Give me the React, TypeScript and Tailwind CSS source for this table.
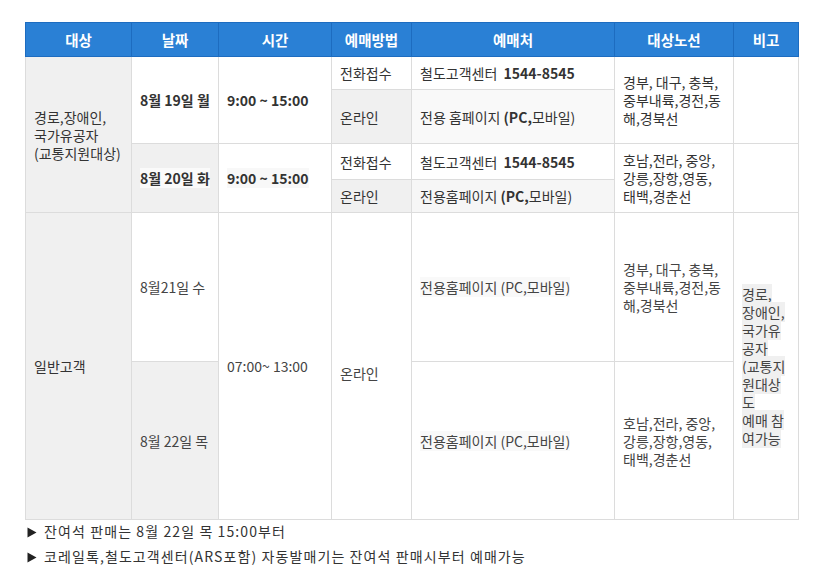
const FONT = { fontFamily: '"Noto Sans CJK KR", "Noto Sans", sans-serif' };

const th = "border border-[#1d6cc0] bg-[#2a80d5] text-white font-bold text-[14.5px] text-center align-middle";
const td = "border border-[#dcdcdc] px-2 align-middle text-[14px] leading-[18px] text-[#333]";

const bigoLines = ["경로,", "장애인,", "국가유", "공자", "(교통지", "원대상", "도", "예매 참", "여가능"];

function Arrow() {
  return (
    <svg width="10" height="11" viewBox="0 0 10 11" className="inline-block mr-[7px] align-[-1px]">
      <path d="M0.5 0.5 L9.5 5.5 L0.5 10.5 Z" fill="#222" />
    </svg>
  );
}

export default function App() {
  return (
    <div className="bg-white w-[817px] h-[575px] pt-[22px] pl-[25px]" style={FONT}>
      <table className="table-fixed border-collapse w-[773px]">
        <colgroup>
          <col className="w-[106px]" />
          <col className="w-[87px]" />
          <col className="w-[113px]" />
          <col className="w-[80px]" />
          <col className="w-[203px]" />
          <col className="w-[119px]" />
          <col className="w-[65px]" />
        </colgroup>
        <thead>
          <tr className="h-[34px]">
            <th className={th}>대상</th>
            <th className={th}>날짜</th>
            <th className={th}>시간</th>
            <th className={th}>예매방법</th>
            <th className={th}>예매처</th>
            <th className={th}>대상노선</th>
            <th className={th}>비고</th>
          </tr>
        </thead>
        <tbody>
          <tr className="h-[33px]">
            <td rowSpan={4} className={`${td} bg-[#f0f0f0]`}>
              경로,장애인,
              <br />
              국가유공자
              <br />
              (교통지원대상)
            </td>
            <td rowSpan={2} className={`${td} bg-white font-bold`}>8월 19일 월</td>
            <td rowSpan={2} className={`${td} bg-white font-bold`}>9:00 ~ 15:00</td>
            <td className={`${td} bg-white`}>전화접수</td>
            <td className={`${td} bg-white`}>
              철도고객센터&nbsp;&nbsp;<span className="font-bold">1544-8545</span>
            </td>
            <td rowSpan={2} className={`${td} bg-white`}>
              경부, 대구, 충복,
              <br />
              중부내륙,경전,동
              <br />
              해,경북선
            </td>
            <td rowSpan={2} className={`${td} bg-white`}></td>
          </tr>
          <tr className="h-[54px]">
            <td className={`${td} bg-[#f0f0f0]`}>온라인</td>
            <td className={`${td} bg-[#f9f9f9]`}>
              전용 홈페이지 <span className="font-bold">(PC,</span>모바일)
            </td>
          </tr>
          <tr className="h-[36px]">
            <td rowSpan={2} className={`${td} bg-[#f0f0f0] font-bold`}>
              <span className="bg-[#fafafa]">8월 20일 화</span>
            </td>
            <td rowSpan={2} className={`${td} bg-white font-bold`}>
              <span className="bg-[#f8f8f8]">9:00 ~ 15:00</span>
            </td>
            <td className={`${td} bg-white`}>전화접수</td>
            <td className={`${td} bg-white`}>
              철도고객센터&nbsp;&nbsp;<span className="font-bold">1544-8545</span>
            </td>
            <td rowSpan={2} className={`${td} bg-white`}>
              호남,전라, 중앙,
              <br />
              강릉,장항,영동,
              <br />
              태백,경춘선
            </td>
            <td rowSpan={2} className={`${td} bg-white`}></td>
          </tr>
          <tr className="h-[33px]">
            <td className={`${td} bg-[#f0f0f0]`}>온라인</td>
            <td className={`${td} bg-[#f6f6f6]`}>
              전용홈페이지 <span className="font-bold">(PC,</span>모바일)
            </td>
          </tr>
          <tr className="h-[149px]">
            <td rowSpan={2} className={`${td} bg-[#f0f0f0]`}>일반고객</td>
            <td className={`${td} bg-white text-[#444]`}>8월21일 수</td>
            <td rowSpan={2} className={`${td} bg-white text-[#444]`}>07:00~ 13:00</td>
            <td rowSpan={2} className={`${td} bg-white text-[#444] pt-[14px]`}>온라인</td>
            <td className={`${td} bg-white text-[#444]`}>
              <span className="bg-[#f9f9f9]">전용홈페이지 (PC,모바일)</span>
            </td>
            <td className={`${td} bg-white text-[#444]`}>
              경부, 대구, 충복,
              <br />
              중부내륙,경전,동
              <br />
              해,경북선
            </td>
            <td rowSpan={2} className={`${td} bg-white text-[#444]`}>
              {bigoLines.map((l) => (
                <div key={l} className="whitespace-nowrap">
                  <span className="bg-[#f0f0f0]">{l}</span>
                </div>
              ))}
            </td>
          </tr>
          <tr className="h-[158px]">
            <td className={`${td} bg-[#f0f0f0] text-[#444]`}>8월 22일 목</td>
            <td className={`${td} bg-white text-[#444]`}>
              <span className="bg-[#f9f9f9]">전용홈페이지 (PC,모바일)</span>
            </td>
            <td className={`${td} bg-white text-[#444]`}>
              호남,전라, 중앙,
              <br />
              강릉,장항,영동,
              <br />
              태백,경춘선
            </td>
          </tr>
        </tbody>
      </table>
      <div className="text-[14px] tracking-[1.1px] leading-[25px] text-[#333] mt-[-1px] pl-[2px]">
        <p>
          <Arrow />
          잔여석 판매는 8월 22일 목 15:00부터
        </p>
        <p>
          <Arrow />
          코레일톡,철도고객센터(ARS포함) 자동발매기는 잔여석 판매시부터 예매가능
        </p>
      </div>
    </div>
  );
}
